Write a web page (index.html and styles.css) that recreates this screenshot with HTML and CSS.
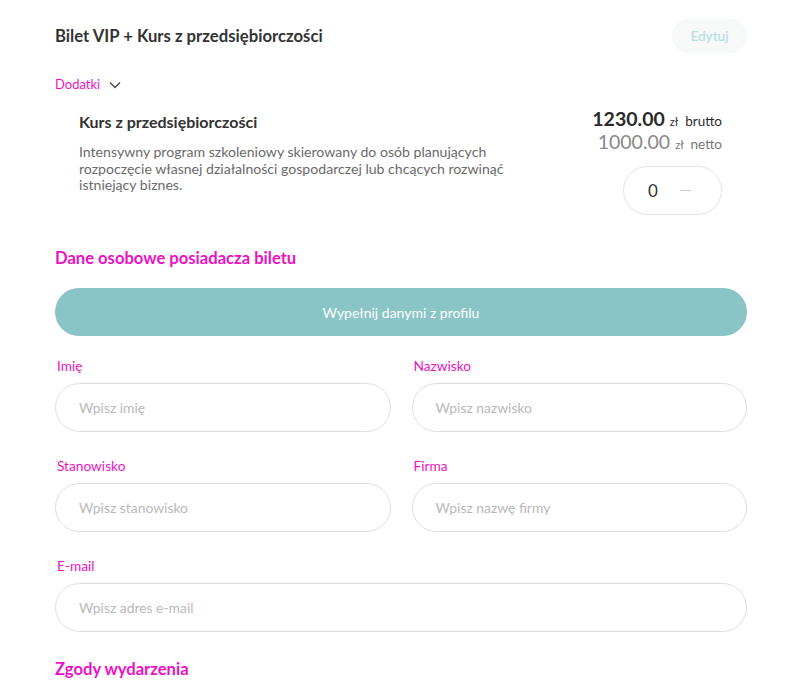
FILE: index.html
```html
<!DOCTYPE html>
<html lang="pl">
<head>
<meta charset="utf-8">
<link rel="stylesheet" href="styles.css">
</head>
<body>
<div class="page">
  <div class="ticket-head">
    <h2 class="ticket-title">Bilet VIP + Kurs z przedsiębiorczości</h2>
    <button class="edit-btn">Edytuj</button>
  </div>
  <div class="addons-toggle">
    <span>Dodatki</span>
    <svg class="chev" width="12" height="8" viewBox="0 0 12 8"><path d="M1 1.5 L6 6.5 L11 1.5" fill="none" stroke="#444" stroke-width="1.3"/></svg>
  </div>
  <div class="addon">
    <div class="addon-info">
      <h3 class="addon-title">Kurs z przedsiębiorczości</h3>
      <p class="addon-desc">Intensywny program szkoleniowy skierowany do osób planujących rozpoczęcie własnej działalności gospodarczej lub chcących rozwinąć istniejący biznes.</p>
    </div>
    <div class="addon-side">
      <div class="price gross"><span class="amount">1230.00</span><span class="cur">zł</span><span class="kind">brutto</span></div>
      <div class="price net"><span class="amount">1000.00</span><span class="cur">zł</span><span class="kind">netto</span></div>
      <div class="qty"><span class="qty-val">0</span><span class="qty-minus"></span></div>
    </div>
  </div>

  <h3 class="section-title">Dane osobowe posiadacza biletu</h3>
  <button class="fill-btn">Wypełnij danymi z profilu</button>

  <div class="form-grid">
    <div class="field">
      <label>Imię</label>
      <div class="input">Wpisz imię</div>
    </div>
    <div class="field">
      <label>Nazwisko</label>
      <div class="input">Wpisz nazwisko</div>
    </div>
    <div class="field">
      <label>Stanowisko</label>
      <div class="input">Wpisz stanowisko</div>
    </div>
    <div class="field">
      <label>Firma</label>
      <div class="input">Wpisz nazwę firmy</div>
    </div>
    <div class="field wide">
      <label>E-mail</label>
      <div class="input">Wpisz adres e-mail</div>
    </div>
  </div>

  <h3 class="section-title consents">Zgody wydarzenia</h3>
</div>
</body>
</html>
```

FILE: styles.css
```css
* { box-sizing: border-box; }
body {
  margin: 0;
  background: #fff;
  font-family: "Lato", "Open Sans", sans-serif;
  color: #333;
}
.page {
  width: 788px;
  padding: 19px 41px 0 55px;
}
.ticket-head {
  display: flex;
  justify-content: space-between;
  align-items: center;
  height: 34px;
}
.ticket-title {
  margin: 0;
  font-size: 16.7px;
  font-weight: 700;
  color: #333;
}
.edit-btn {
  width: 75px;
  height: 34px;
  border: none;
  border-radius: 17px;
  background: #f7f8f8;
  color: #b7dfe1;
  font-family: inherit;
  font-size: 13.5px;
  font-weight: 600;
  padding: 0;
}
.addons-toggle {
  margin-top: 22px;
  display: flex;
  align-items: center;
  gap: 9px;
  height: 18px;
  color: #f012c6;
  font-size: 13px;
}
.chev { margin-top: 1px; }
.addon {
  display: flex;
  justify-content: space-between;
  padding: 15px 25px 0 24px;
}
.addon-info { width: 445px; }
.addon-title {
  margin: 4px 0 0;
  font-size: 16px;
  font-weight: 700;
  color: #333;
}
.addon-desc {
  margin: 13px 0 0;
  font-size: 14.1px;
  line-height: 16.5px;
  color: #6a6a6a;
}
.addon-side {
  display: flex;
  flex-direction: column;
  align-items: flex-end;
}
.price {
  display: flex;
  align-items: baseline;
  height: 23px;
}
.price .amount { font-size: 19.5px; }
.price .cur { font-size: 11px; margin-left: 5px; }
.price .kind { font-size: 13.5px; margin-left: 7px; }
.gross { color: #2a2a2a; margin-top: -1px; }
.gross .amount { font-weight: 700; }
.net { color: #888; }
.net .kind, .net .cur { color: #777; }
.qty {
  margin-top: 13px;
  width: 99px;
  height: 49px;
  border: 1px solid #e3e3e3;
  border-radius: 25px;
  display: flex;
  align-items: center;
  padding-left: 24px;
}
.qty-val { font-size: 17px; color: #333; }
.qty-minus {
  width: 11px;
  height: 1px;
  background: #ccc;
  margin-left: 22px;
}
.section-title {
  margin: 33px 0 0;
  font-size: 16.6px;
  font-weight: 700;
  color: #ee10c6;
  line-height: 20px;
}
.fill-btn {
  display: block;
  width: 100%;
  height: 48px;
  margin-top: 20px;
  border: none;
  border-radius: 24px;
  background: #89c4c6;
  color: #fff;
  font-family: inherit;
  font-size: 14px;
}
.form-grid {
  display: grid;
  grid-template-columns: 1fr 1fr;
  column-gap: 21px;
  row-gap: 25px;
  margin-top: 21px;
}
.field { display: flex; flex-direction: column; }
.field.wide { grid-column: 1 / 3; }
.field label {
  font-size: 13.7px;
  color: #f012c6;
  padding-left: 2px;
  line-height: 18px;
}
.input {
  margin-top: 8px;
  height: 49px;
  border: 1px solid #dedde3;
  border-radius: 25px;
  display: flex;
  align-items: center;
  padding-left: 23px;
  font-size: 13.9px;
  color: #b9b9b9;
}
.consents { margin-top: 27px; }
```
